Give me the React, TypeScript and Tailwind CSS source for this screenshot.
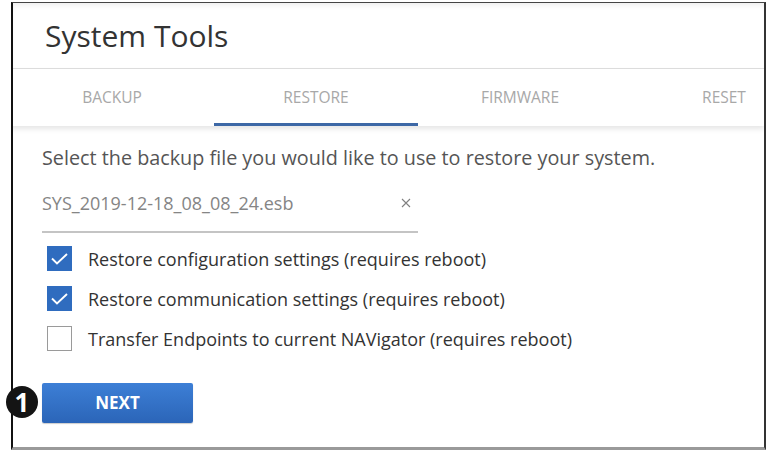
import React from "react";

const tabs = ["BACKUP", "RESTORE", "FIRMWARE", "RESET"];

const options = [
  { label: "Restore configuration settings (requires reboot)", checked: true },
  { label: "Restore communication settings (requires reboot)", checked: true },
  { label: "Transfer Endpoints to current NAVigator (requires reboot)", checked: false },
];

const Check = ({ checked }: { checked: boolean }) => {
  if (!checked) {
    return <span className="w-[25px] h-[25px] shrink-0 border border-[#9a9a9a] bg-white" />;
  }
  return (
    <span className="w-[25px] h-[25px] shrink-0 bg-[#2f6cbf] flex items-center justify-center">
      <svg width="19" height="14" viewBox="0 0 19 14" fill="none">
        <polyline points="2,6.5 7,11.5 17,2" stroke="white" strokeWidth="1.9" />
      </svg>
    </span>
  );
};

const App = () => {
  return (
    <div
      className="w-[771px] h-[454px] bg-white relative overflow-hidden"
      style={{ fontFamily: '"Open Sans", "Noto Sans", sans-serif' }}
    >
      <div className="ml-[11px] mt-[2px] w-[755px] h-[448px] border-l-2 border-t border-r-2 border-b-[3px] border-l-[#111] border-t-[#444] border-r-[#333] border-b-[#9a9a9a] bg-white overflow-hidden">
        {/* header */}
        <div className="h-[66px] flex items-center pl-[32px] border-b border-[#dedede] shadow-[inset_0_5px_6px_-3px_rgba(0,0,0,0.08)]">
          <h1 className="text-[30px] leading-none text-[#333]">System Tools</h1>
        </div>

        {/* tabs */}
        <div className="relative z-10 h-[57px] flex -ml-[3px] bg-white shadow-[0_3px_5px_rgba(0,0,0,0.10)]">
          {tabs.map((t) => (
            <div
              key={t}
              className={
                "w-[204px] shrink-0 flex items-center justify-center text-[15.5px] text-[#a8a8a8] " +
                (t === "RESTORE" ? "border-b-[3px] border-[#3d68a6] pt-[3px]" : "")
              }
            >
              {t}
            </div>
          ))}
        </div>

        {/* content */}
        <div className="pl-[29px]">
          <p className="mt-[19px] text-[19.8px] leading-[26px] text-[#555]">
            Select the backup file you would like to use to restore your system.
          </p>

          <div className="mt-[20px] w-[376px] flex items-center justify-between pr-[6px] pb-[16px] border-b-2 border-[#c4c4c4]">
            <span className="text-[18px] leading-[24px] text-[#858585]">SYS_2019-12-18_08_08_24.esb</span>
            <svg width="10" height="10" viewBox="0 0 10 10" className="mr-[1px]">
              <path d="M1 1 L9 9 M9 1 L1 9" stroke="#808080" strokeWidth="1.1" />
            </svg>
          </div>

          <div className="mt-[13px] flex flex-col gap-[15px] pl-[5px]">
            {options.map((o) => (
              <label key={o.label} className="flex items-center gap-[16px] h-[25px]">
                <Check checked={o.checked} />
                <span className="text-[18px] text-[#333] pt-[2px]">{o.label}</span>
              </label>
            ))}
          </div>

          <button className="mt-[32px] w-[151px] h-[40px] rounded-[2px] bg-gradient-to-b from-[#3d7fd6] to-[#2b65b8] text-white font-bold text-[17px] shadow-[0_1px_1px_rgba(0,0,0,0.2)]">
            NEXT
          </button>
        </div>
      </div>

      {/* callout badge */}
      <div className="absolute left-[6px] top-[386px] w-[32px] h-[32px] rounded-full bg-[#141414] flex items-center justify-center text-white font-bold text-[26px] leading-none">
        1
      </div>
    </div>
  );
};

export default App;
